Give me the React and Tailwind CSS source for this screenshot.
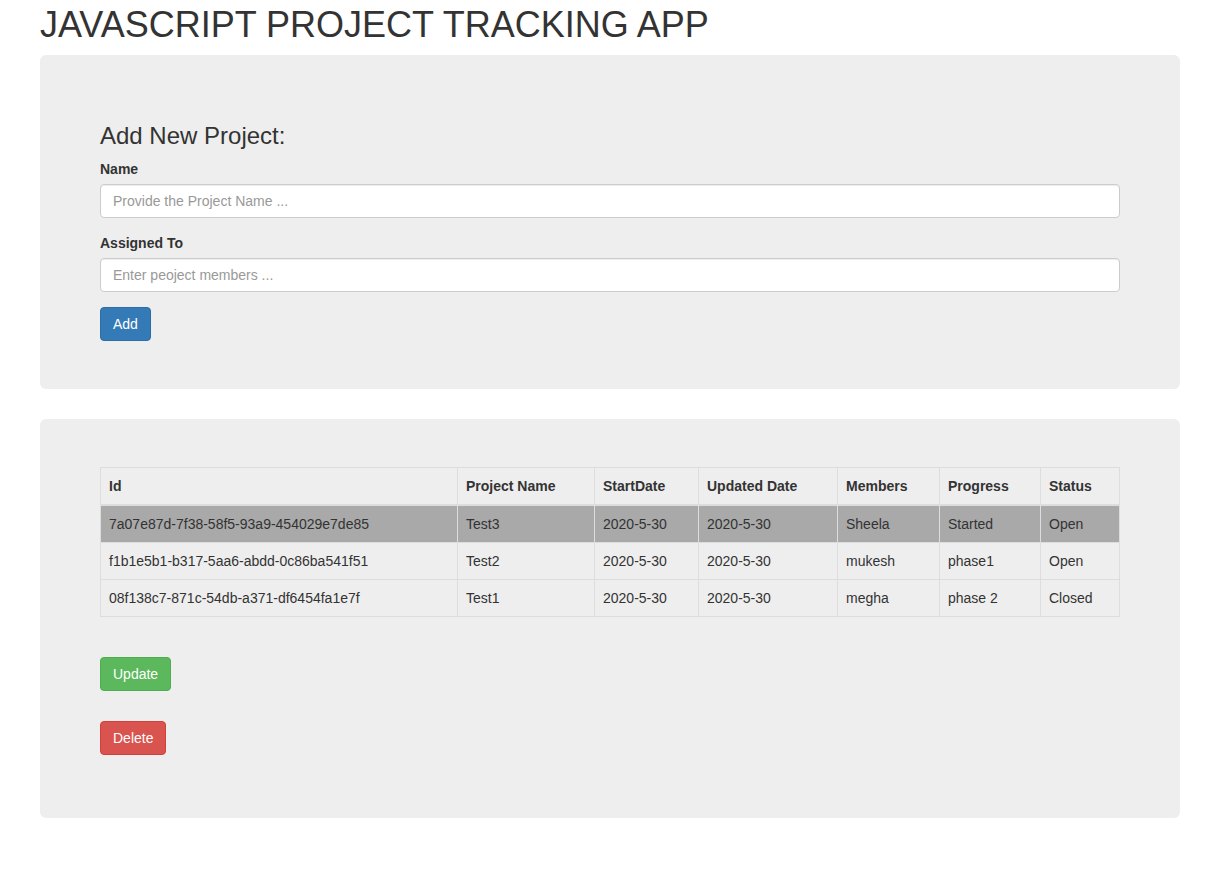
import React from 'react';

const rows = [
  { id: '7a07e87d-7f38-58f5-93a9-454029e7de85', name: 'Test3', start: '2020-5-30', updated: '2020-5-30', members: 'Sheela', progress: 'Started', status: 'Open', active: true },
  { id: 'f1b1e5b1-b317-5aa6-abdd-0c86ba541f51', name: 'Test2', start: '2020-5-30', updated: '2020-5-30', members: 'mukesh', progress: 'phase1', status: 'Open' },
  { id: '08f138c7-871c-54db-a371-df6454fa1e7f', name: 'Test1', start: '2020-5-30', updated: '2020-5-30', members: 'megha', progress: 'phase 2', status: 'Closed' },
];

const th = 'border border-[#ddd] border-b-2 px-2 py-2 text-left font-bold leading-5';
const td = 'border border-[#ddd] px-2 py-2 leading-5';

export default function App() {
  return (
    <div className="min-h-screen bg-white text-[14px] text-[#333] font-['Liberation_Sans',Arial,sans-serif]">
      <div className="w-[1140px] ml-[40px]">
        <h1 className="text-[36px] leading-[40px] font-normal pt-[5px] mb-[10px]">JAVASCRIPT PROJECT TRACKING APP</h1>

        {/* Add project form */}
        <div className="bg-[#eee] rounded-[6px] px-[60px] py-[48px] mb-[30px]">
          <h3 className="text-[24px] leading-[26px] mt-[20px] mb-[10px]">Add New Project:</h3>
          <div className="mb-[15px]">
            <label className="block font-bold leading-5 mb-[5px]">Name</label>
            <input
              className="block w-full h-[34px] px-3 py-[6px] bg-white border border-[#ccc] rounded-[4px] shadow-[inset_0_1px_1px_rgba(0,0,0,0.075)] placeholder:text-[#999] outline-none"
              placeholder="Provide the Project Name ..."
            />
          </div>
          <div className="mb-[15px]">
            <label className="block font-bold leading-5 mb-[5px]">Assigned To</label>
            <input
              className="block w-full h-[34px] px-3 py-[6px] bg-white border border-[#ccc] rounded-[4px] shadow-[inset_0_1px_1px_rgba(0,0,0,0.075)] placeholder:text-[#999] outline-none"
              placeholder="Enter peoject members ..."
            />
          </div>
          <button className="h-[34px] px-3 text-white bg-[#337ab7] border border-[#2e6da4] rounded-[4px] leading-5">Add</button>
        </div>

        {/* Project list */}
        <div className="bg-[#eee] rounded-[6px] px-[60px] pt-[48px] pb-[63px] mb-[30px]">
          <table className="w-full border-collapse border border-[#ddd] table-fixed">
            <thead>
              <tr>
                <th className={`${th} w-[357px]`}>Id</th>
                <th className={`${th} w-[137px]`}>Project Name</th>
                <th className={`${th} w-[104px]`}>StartDate</th>
                <th className={`${th} w-[139px]`}>Updated Date</th>
                <th className={`${th} w-[102px]`}>Members</th>
                <th className={`${th} w-[101px]`}>Progress</th>
                <th className={th}>Status</th>
              </tr>
            </thead>
            <tbody>
              {rows.map((r) => (
                <tr key={r.id} className={r.active ? 'bg-[#a9a9a9]' : ''}>
                  <td className={td}>{r.id}</td>
                  <td className={td}>{r.name}</td>
                  <td className={td}>{r.start}</td>
                  <td className={td}>{r.updated}</td>
                  <td className={td}>{r.members}</td>
                  <td className={td}>{r.progress}</td>
                  <td className={td}>{r.status}</td>
                </tr>
              ))}
            </tbody>
          </table>

          <div className="mt-[40px] flex flex-col items-start gap-[30px]">
            <button className="h-[34px] px-3 text-white bg-[#5cb85c] border border-[#4cae4c] rounded-[4px] leading-5">Update</button>
            <button className="h-[34px] px-3 text-white bg-[#d9534f] border border-[#d43f3a] rounded-[4px] leading-5">Delete</button>
          </div>
        </div>
      </div>
    </div>
  );
}
